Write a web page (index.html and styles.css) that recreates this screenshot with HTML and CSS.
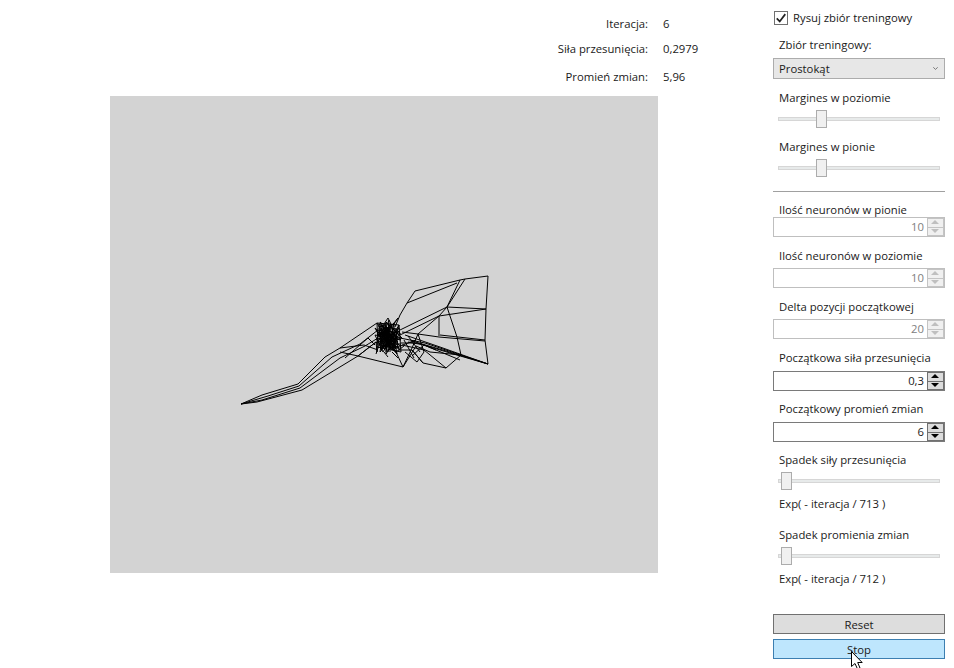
FILE: index.html
```html
<!DOCTYPE html>
<html>
  <head>
    <meta charset="utf-8">
    <title>Sieć Kohonena</title>
    <link rel="stylesheet" href="styles.css">
  </head>
  <body>
    <div class="window">
      <div class="main">
        <div class="stats">
          <span class="stat-label">Iteracja:</span><span>6</span>
          <span class="stat-label">Siła przesunięcia:</span><span>0,2979</span>
          <span class="stat-label">Promień zmian:</span><span>5,96</span>
        </div>
        <svg class="canvas" viewBox="110 96 548 477">
          <g fill="none" stroke="#000" stroke-width="1">
            <!-- outer edge and the columns on the right -->
            <path d="M488 276 486 309 485 340 488 364"/>
            <path d="M488 276 465 279 460 280 415 291 407 303 400 315 395 327"/>
            <path d="M465 279 447 307 439 316 418 334 412 348 403 367 358 356 340 352"/>
            <path d="M457 283 407 303"/>
            <path d="M460 280 447 307 400 330"/>
            <path d="M486 309 447 307"/>
            <path d="M486 309 439 316 400 335"/>
            <path d="M439 316 439 336"/>
            <path d="M485 341 439 337 418 334 402 332"/>
            <path d="M485 340 440 335"/>
            <path d="M447 307 457 337 461 355 446 368 423 363 412 350"/>
            <path d="M488 364 461 355 425 343 400 338"/>
            <path d="M488 364 440 347 405 335"/>
            <path d="M488 364 446 351 412 341"/>
            <path d="M488 364 450 353 417 343 401 343"/>
            <path d="M460 360 424 345 408 342"/>
            <path d="M446 368 424 350 402 345"/>
            <path d="M461 355 430 352 416 346 403 367 396 352"/>
            <path d="M423 363 412 350 398 350"/>
            <path d="M418 334 424 352 417 362 405 352"/>
            <path d="M412 356 424 345 436 350"/>
            <path d="M408 336 420 352 M404 340 414 358 M400 346 416 340"/>
            <!-- long tail to the lower left -->
            <path d="M241 404 262 395 298 384 325 357 340 348 377 323"/>
            <path d="M241 404 257 402 302 390 358 356 376 342"/>
            <path d="M241 404 268 396 299 386 332 357 360 344 378 330"/>
            <path d="M241 404 262 400 300 388 340 358 365 346 378 338"/>
            <path d="M340 348 364 345 378 350"/>
            <path d="M358 356 376 342 377 352 377 338"/>
            <path d="M345 358 368 338 375 345"/>
            <!-- dense knot in the middle -->
            <path d="M377 323 399 325 401 352 378 347 377 323 392 350 399 325 383 352 375 335 401 340 380 322 396 352 376 330 400 333 386 354 389 320 379 345 401 347 382 326 398 342 377 338 394 323 388 352 375 328 400 350 384 324 380 352 399 331 376 343 392 326 397 354 378 332 402 338 386 322 383 348 395 335 379 324 391 345 376 348 399 328"/>
            <path d="M379 326 396 329 398 348 381 346 379 326 394 346 397 331 382 342 391 324 380 336 398 339 385 349 388 327 378 341 395 351 383 329 393 337 381 350 389 333 377 335 396 343 384 336 391 349 380 330 399 345"/>
            <path d="M382 325 382 349 M386 323 386 352 M390 323 390 352 M394 325 394 351 M378 329 400 329 M377 334 401 334 M376 339 401 339 M377 344 400 344"/>
            <path d="M384 327 392 343 388 331 396 349 380 333 393 331 383 344 397 337 386 346 390 329 381 340 395 345"/>
            <path d="M384 324 388 318 392 326 M394 324 398 318 390 328 M378 324 384 326 M396 352 404 346 M392 352 398 358 M378 348 376 354 M384 352 388 357"/>
          </g>
        </svg>
      </div>
      <div class="panel">
        <div class="check-row">
          <span class="check">
            <svg viewBox="0 0 14 14" width="12" height="12"><path d="M2 7.5 5.5 11 12 2.5" fill="none" stroke="#222" stroke-width="2"/></svg>
          </span>
          Rysuj zbiór treningowy
        </div>
        <div class="label combo-label">Zbiór treningowy:</div>
        <div class="combo">
          <span>Prostokąt</span>
          <svg viewBox="0 0 5 3" width="5" height="3"><path d="M.3 .3 2.5 2.4 4.7 .3" fill="none" stroke="#777"/></svg>
        </div>

        <div class="label first">Margines w poziomie</div>
        <div class="slider"><span class="thumb thumb-margin"></span></div>
        <div class="label slider-label">Margines w pionie</div>
        <div class="slider"><span class="thumb thumb-margin"></span></div>

        <div class="separator"></div>

        <div class="label field-top">Ilość neuronów w pionie</div>
        <div class="spin disabled">
          <span class="spin-value">10</span>
          <span class="spin-buttons"><span class="spin-up"></span><span class="spin-down"></span></span>
        </div>
        <div class="label field-next">Ilość neuronów w poziomie</div>
        <div class="spin disabled">
          <span class="spin-value">10</span>
          <span class="spin-buttons"><span class="spin-up"></span><span class="spin-down"></span></span>
        </div>
        <div class="label field-next">Delta pozycji początkowej</div>
        <div class="spin disabled">
          <span class="spin-value">20</span>
          <span class="spin-buttons"><span class="spin-up"></span><span class="spin-down"></span></span>
        </div>
        <div class="label field-wide">Początkowa siła przesunięcia</div>
        <div class="spin">
          <span class="spin-value">0,3</span>
          <span class="spin-buttons"><span class="spin-up"></span><span class="spin-down"></span></span>
        </div>
        <div class="label field-last">Początkowy promień zmian</div>
        <div class="spin">
          <span class="spin-value">6</span>
          <span class="spin-buttons"><span class="spin-up"></span><span class="spin-down"></span></span>
        </div>

        <div class="label decay-label">Spadek siły przesunięcia</div>
        <div class="slider"><span class="thumb thumb-decay"></span></div>
        <div class="label exp">Exp( - iteracja / 713 )</div>
        <div class="label decay-label second">Spadek promienia zmian</div>
        <div class="slider"><span class="thumb thumb-decay"></span></div>
        <div class="label exp">Exp( - iteracja / 712 )</div>

        <div class="button reset">Reset</div>
        <div class="button stop">Stop</div>
      </div>
    </div>
    <svg class="cursor" viewBox="0 0 12 19" width="12" height="19">
      <path d="M.5 .5V15.5L4 12.5 6.5 18 9 17 6.7 11.5H11.2Z" fill="#fff" stroke="#000"/>
    </svg>
  </body>
</html>
```

FILE: styles.css
```css
html, body {
  margin: 0;
  padding: 0;
  height: 668px;
  overflow: hidden;
  background: #fff;
}
body {
  font-family: "Open Sans", "Noto Sans", sans-serif;
  font-size: 11.3px;
  line-height: 16px;
  color: #1a1a1a;
}
.window {
  display: flex;
  height: 668px;
}
.main {
  width: 773px;
  padding-left: 110px;
  box-sizing: border-box;
}
.stats {
  display: grid;
  grid-template-columns: 538px 60px;
  grid-template-rows: 25px 28px 16px;
  column-gap: 15px;
  padding-top: 16px;
  height: 96px;
  box-sizing: border-box;
}
.stat-label {
  text-align: right;
}
.canvas {
  display: block;
  width: 548px;
  height: 477px;
  background: #d3d3d3;
}
.panel {
  width: 172px;
}
.check-row {
  display: flex;
  align-items: center;
  gap: 5px;
  height: 14px;
  margin-top: 11px;
  padding-left: 1px;
}
.check {
  display: flex;
  align-items: center;
  justify-content: center;
  width: 12px;
  height: 12px;
  border: 1px solid #707070;
}
.label {
  padding-left: 6px;
  height: 16px;
}
.combo-label {
  margin-top: 12px;
}
.combo {
  display: flex;
  align-items: center;
  justify-content: space-between;
  height: 19px;
  margin-top: 5px;
  padding: 0 6px 0 5px;
  border: 1px solid #acacac;
  background: #e7e7e7;
}
.first {
  margin-top: 11px;
}
.slider {
  position: relative;
  height: 4px;
  margin: 11px 5px 0;
  background: #e7eaea;
  border: 1px solid #d6d6d6;
  box-sizing: border-box;
}
.slider-label {
  margin-top: 18px;
}
.thumb {
  position: absolute;
  top: -8px;
  width: 11px;
  height: 18px;
  background: #f0f0f0;
  border: 1px solid #acacac;
  box-sizing: border-box;
}
.thumb-margin {
  left: 37px;
}
.thumb-decay {
  left: 2px;
}
.separator {
  height: 1px;
  margin-top: 21px;
  background: #a0a0a0;
}
.field-top {
  margin-top: 10px;
  margin-bottom: -1px;
}
.field-next {
  margin-top: 11px;
  margin-bottom: 4px;
}
.field-wide {
  margin-top: 11px;
  margin-bottom: 5px;
}
.field-last {
  margin-top: 10px;
  margin-bottom: 5px;
}
.spin {
  display: flex;
  align-items: center;
  justify-content: flex-end;
  height: 20px;
  border: 1px solid #7a7a7a;
  box-sizing: border-box;
}
.spin-value {
  margin-right: 3px;
}
.spin-buttons {
  display: flex;
  flex-direction: column;
  width: 17px;
  height: 18px;
}
.spin-up, .spin-down {
  position: relative;
  flex: 1;
  background: #dcdcdc;
  border: 1px solid #707070;
}
.spin-down {
  border-top: none;
}
.spin-up::after, .spin-down::after {
  content: "";
  position: absolute;
  left: 3px;
  border-left: 4px solid transparent;
  border-right: 4px solid transparent;
}
.spin-up::after {
  top: 1px;
  border-bottom: 4px solid #000;
}
.spin-down::after {
  top: 1px;
  border-top: 4px solid #000;
}
.spin.disabled {
  border-color: #bfbfbf;
  color: #808080;
}
.disabled .spin-up, .disabled .spin-down {
  background: #f0f0f0;
  border-color: #c4c4c4;
}
.disabled .spin-up::after {
  border-bottom-color: #bfbfbf;
}
.disabled .spin-down::after {
  border-top-color: #bfbfbf;
}
.decay-label {
  margin-top: 10px;
}
.decay-label.second {
  margin-top: 15px;
}
.exp {
  margin-top: 13px;
}
.button {
  height: 20px;
  line-height: 19px;
  text-align: center;
  box-sizing: border-box;
  border: 1px solid #707070;
  background: #dddddd;
}
.reset {
  margin-top: 27px;
}
.stop {
  margin-top: 5px;
  border-color: #3c7fb1;
  background: #bee6fd;
}
.cursor {
  position: absolute;
  left: 851px;
  top: 651px;
}
```
